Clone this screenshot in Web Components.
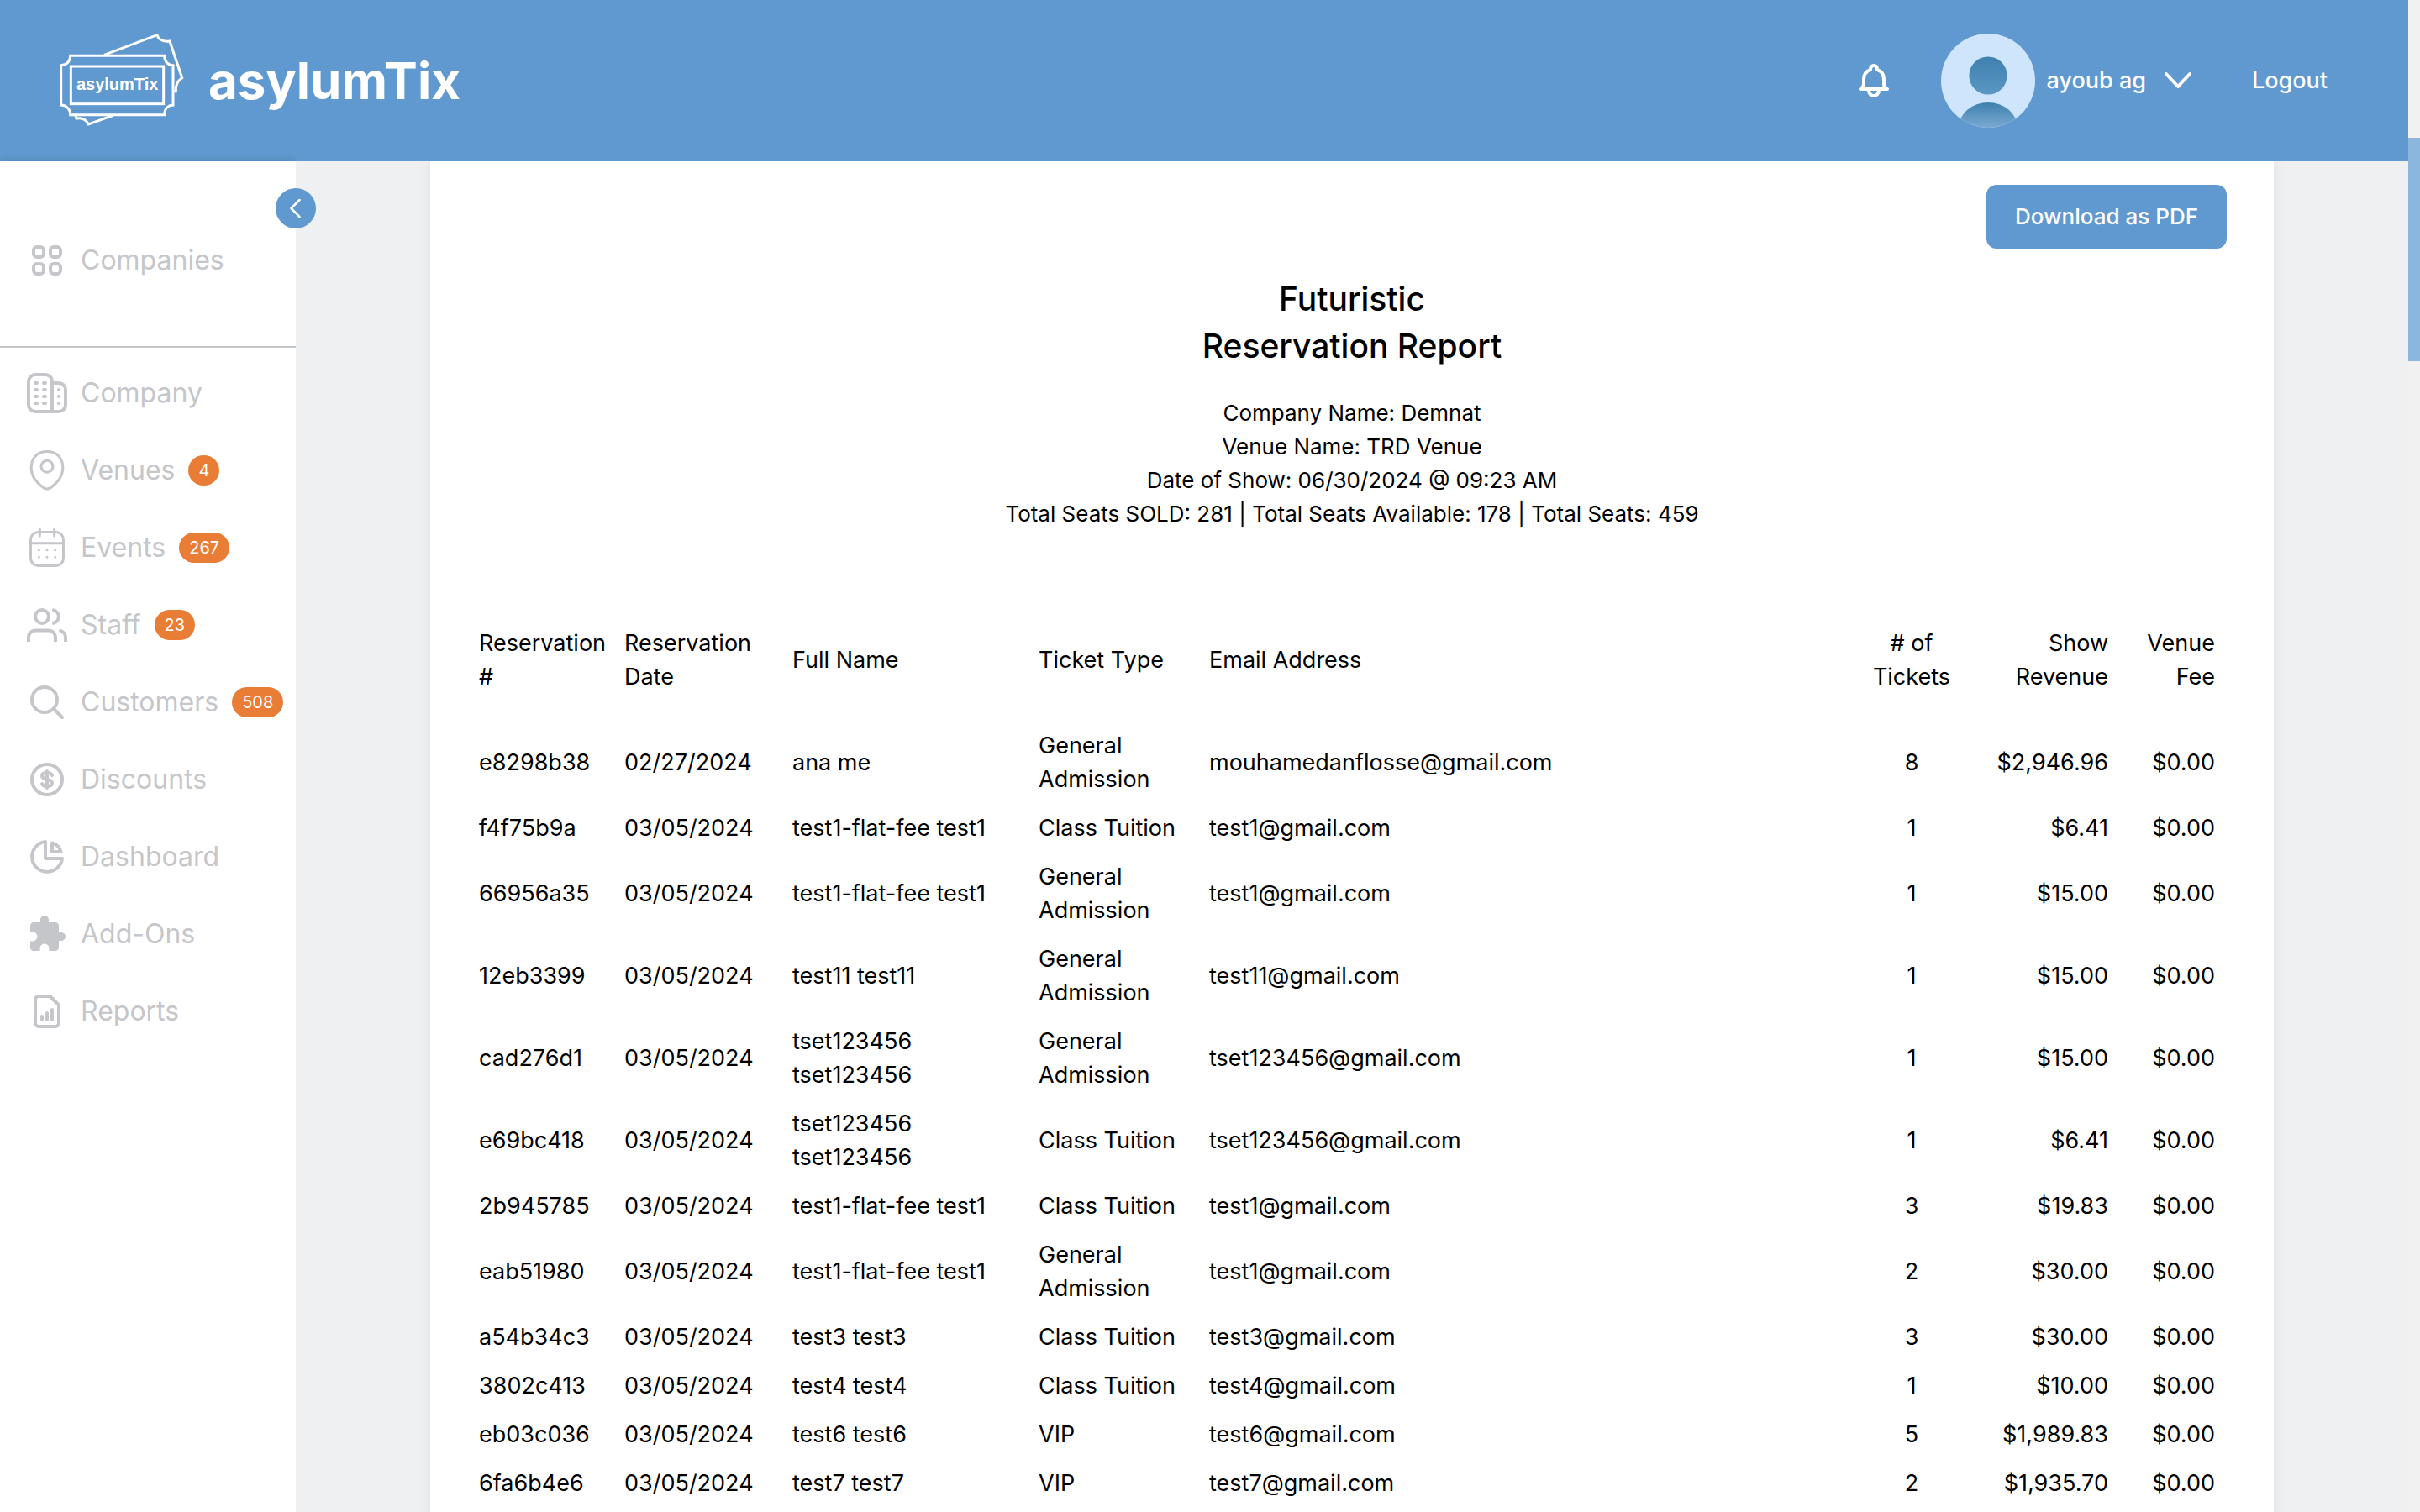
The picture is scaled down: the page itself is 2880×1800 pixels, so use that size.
<!DOCTYPE html>
<html lang="en">
<head>
<meta charset="utf-8">
<meta name="viewport" content="width=device-width, initial-scale=1">
<title>asylumTix – Reservation Report</title>
<style>
  html, body { margin: 0; height: 100%; }
  body {
    --blue: #6099cf;
    --orange: #e97d36;
    --muted: #c5c6ca;
    --canvas: #eff0f2;
    font-family: Inter, "DM Sans", "Liberation Sans", sans-serif;
    color: #000;
    overflow: hidden;
  }
</style>
</head>
<body>
<app-shell>
  <app-header slot="header" user="ayoub ag"></app-header>
  <side-nav slot="nav">
    <nav-item slot="top" icon="grid">Companies</nav-item>
    <nav-item icon="building">Company</nav-item>
    <nav-item icon="pin" count="4">Venues</nav-item>
    <nav-item icon="calendar" count="267">Events</nav-item>
    <nav-item icon="people" count="23">Staff</nav-item>
    <nav-item icon="search" count="508">Customers</nav-item>
    <nav-item icon="dollar">Discounts</nav-item>
    <nav-item icon="pie">Dashboard</nav-item>
    <nav-item icon="puzzle">Add-Ons</nav-item>
    <nav-item icon="report">Reports</nav-item>
  </side-nav>
  <report-card>
    <span slot="title">Futuristic</span>
    <span slot="title">Reservation Report</span>
    <span slot="info">Company Name: Demnat</span>
    <span slot="info">Venue Name: TRD Venue</span>
    <span slot="info">Date of Show: 06/30/2024 @ 09:23 AM</span>
    <span slot="info">Total Seats SOLD: 281 | Total Seats Available: 178 | Total Seats: 459</span>
    <reservation-table></reservation-table>
  </report-card>
</app-shell>

<script>
const define = (name, html, setup) => customElements.define(name, class extends HTMLElement {
  connectedCallback() {
    if (this.shadowRoot) return;
    const root = this.attachShadow({ mode: 'open' });
    const template = document.createElement('template');
    template.innerHTML = html;
    root.append(template.content.cloneNode(true));
    if (setup) setup(this, root);
  }
});

/* Icons share a 48-unit grid; stroke colour follows the text colour. */
const ICONS = {
  grid: '<g stroke-width="4"><rect x="8" y="8" width="12" height="12" rx="4"/><rect x="28" y="8" width="12" height="12" rx="4"/><rect x="8" y="28" width="12" height="12" rx="4"/><rect x="28" y="28" width="12" height="12" rx="4"/></g>',
  building: '<path stroke-width="4" d="M30 46V10a8 8 0 0 0-8-8H10a8 8 0 0 0-8 8v28a8 8 0 0 0 8 8h28a8 8 0 0 0 8-8V20a8 8 0 0 0-8-8h-8"/><path stroke-width="4" stroke-linecap="round" d="M10 12h2M20 12h2M10 20h2M20 20h2M10 28h2M20 28h2M10 36h2M20 36h2M38 20h.01M38 28h.01M38 36h.01"/>',
  pin: '<g stroke-width="3"><path d="M24 1.5C12 1.5 5.2 9.5 5.2 21c0 10 7.6 18.500 14 23.200 3 2.300 6.600 2.300 9.600 0C35.200 39.500 42.800 31 42.800 21 42.800 9.500 36 1.500 24 1.500z"/><circle cx="24" cy="19.300" r="7"/></g>',
  calendar: '<g stroke-width="3" stroke-linecap="round"><rect x="4.500" y="5.500" width="39" height="40" rx="9"/><path d="M5 18.700h38M15.300 2v8M32.700 2v8M14.300 26.700h.01M24 26.700h.01M33.700 26.700h.01M14.300 35.300h.01M24 35.300h.01M33.700 35.300h.01"/></g>',
  people: '<g stroke-width="4"><circle cx="18" cy="14" r="8"/><path d="M2 44v-5.500a8 8 0 0 1 8-8h16a8 8 0 0 1 8 8V44"/><path stroke-linecap="round" d="M32 6.300a8 8 0 0 1 0 15.400M40 31a8 8 0 0 1 6 7.500"/><path d="M46 38v6"/></g>',
  search: '<g stroke-width="4" stroke-linecap="round"><circle cx="21" cy="21" r="15"/><path d="M32 32l10 10"/></g>',
  dollar: '<g stroke-width="4" stroke-linecap="round"><circle cx="24" cy="24" r="18"/><path d="M24 14v20M30 19c-.8-2-2.800-3-6-3-3.600 0-6 1.200-6 3.800s2.400 3.400 6 4.100 6 1.600 6 4.100-2.400 4-6 4-5.200-1-6-3"/></g>',
  pie: '<g stroke-width="4" stroke-linejoin="round"><path d="M22 6v20h20A18 18 0 1 1 22 6z"/><path d="M30 7.500V18h10.500A15 15 0 0 0 30 7.500z"/></g>',
  puzzle: '<path fill="currentColor" stroke="none" transform="scale(2)" d="M20.500 11H19V7c0-1.100-.9-2-2-2h-4V3.500C13 2.120 11.880 1 10.500 1S8 2.120 8 3.500V5H4c-1.100 0-1.990.9-1.990 2v3.800H3.500c1.490 0 2.700 1.210 2.700 2.700s-1.210 2.700-2.700 2.700H2V20c0 1.100.9 2 2 2h3.800v-1.500c0-1.490 1.210-2.700 2.700-2.700 1.490 0 2.700 1.210 2.700 2.700V22H17c1.100 0 2-.9 2-2v-4h1.500c1.380 0 2.500-1.120 2.500-2.500S21.880 11 20.500 11z"/>',
  report: '<g stroke-width="4" stroke-linecap="round"><path stroke-linejoin="round" d="M27.500 6H14a4 4 0 0 0-4 4v28a4 4 0 0 0 4 4h20a4 4 0 0 0 4-4V16.500z"/><path d="M18 30v4M24 26v8M30 22v12"/></g>',
  bell: '<g stroke-width="4" stroke-linejoin="round"><path d="M8 34c3-1.500 4-3 4-6v-5c0-6 3-10.500 8-12 0-3.500 1.500-5 4-5s4 1.500 4 5c5 1.500 8 6 8 12v5c0 3 1 4.500 4 6z"/><path d="M18 35.500a6 6.500 0 0 0 12 0"/></g>',
  down: '<path stroke-width="4" stroke-linecap="round" stroke-linejoin="round" d="M10 16l14 15 14-15"/>',
  left: '<path stroke-width="5" stroke-linecap="round" stroke-linejoin="round" d="M33 4L13 24l20 20"/>'
};

define('app-icon', `
  <style>
    :host { display: block; flex: none; width: 48px; height: 48px; }
    svg { display: block; width: 100%; height: 100%; fill: none; stroke: currentColor; }
  </style>
  <svg viewBox="0 0 48 48" aria-hidden="true"></svg>`,
  (el, root) => { root.querySelector('svg').innerHTML = ICONS[el.getAttribute('name')] || ''; });

define('ticket-logo', `
  <style>
    :host { display: block; flex: none; width: 170px; height: 130px; }
    svg { display: block; width: 100%; height: 100%; }
    text { font: bold 60px "Liberation Sans", sans-serif; fill: #fff; }
  </style>
  <svg viewBox="0 3 510 390" fill="none" stroke="#fff" stroke-width="9" aria-hidden="true">
    <path d="M192 106L381 35C386 52 400 60 426 57L470 188C452 200 446 214 448 236H440M90 322L93 333C114 329 128 338 136 354L224 322"/>
    <path d="M71 109H407C407 130 420 143 438 143V285C420 286 407 298 407 320H71C71 300 58 286 38 285V143C58 142 71 130 71 109Z"/>
    <rect x="73" y="147" width="331" height="134"/>
    <text x="239" y="230" text-anchor="middle" stroke="none">asylumTix</text>
  </svg>`);

define('user-avatar', `
  <style>
    :host { display: block; flex: none; width: 112px; height: 112px; }
    svg { display: block; width: 100%; height: 100%; border-radius: 50%; }
  </style>
  <svg viewBox="0 0 112 112" aria-hidden="true">
    <defs>
      <linearGradient id="head" x1="0" y1="0" x2="0" y2="1"><stop stop-color="#3e80ae"/><stop offset="1" stop-color="#5b97c4"/></linearGradient>
      <linearGradient id="body" gradientUnits="userSpaceOnUse" x1="0" y1="82" x2="0" y2="112"><stop stop-color="#3e80ae"/><stop offset="1" stop-color="#7aaad2"/></linearGradient>
    </defs>
    <rect width="112" height="112" fill="#cfe5fc"/>
    <circle cx="56" cy="50" r="22.600" fill="url(#head)"/>
    <ellipse cx="56" cy="112" rx="35" ry="30" fill="url(#body)"/>
  </svg>`);

define('app-header', `
  <style>
    :host { display: flex; align-items: center; box-sizing: border-box; height: 192px; padding: 0 96px 0 60px; background: var(--blue); color: #fff; }
    .brand { display: flex; align-items: center; gap: 18px; margin-right: auto; color: inherit; text-decoration: none; font-size: 60px; font-weight: 700; line-height: 72px; }
    button, .logout { font: 500 27px/40px Inter, "Liberation Sans", sans-serif; color: inherit; background: none; border: 0; padding: 0; text-decoration: none; }
    .bell { margin-right: 56px; }
    .user { display: flex; align-items: center; gap: 14px; margin-right: 64px; }
  </style>
  <a class="brand" href="#home"><ticket-logo></ticket-logo><span>asylumTix</span></a>
  <button class="bell" aria-label="Notifications"><app-icon name="bell"></app-icon></button>
  <button class="user"><user-avatar></user-avatar><span class="name"></span><app-icon name="down"></app-icon></button>
  <a class="logout" href="#logout">Logout</a>`,
  (el, root) => { root.querySelector('.name').textContent = el.getAttribute('user'); });

define('count-badge', `
  <style>
    :host { display: block; flex: none; box-sizing: border-box; padding: 0 12px; border-radius: 18px; background: var(--orange); color: #fff; font-size: 20px; line-height: 36px; }
  </style>
  <slot></slot>`);

define('nav-item', `
  <style>
    :host { display: block; }
    a { display: flex; align-items: center; gap: 16px; height: 92px; padding-left: 32px; color: var(--muted); text-decoration: none; font-size: 32px; line-height: 40px; }
  </style>
  <a href="#"><span><slot></slot></span></a>`,
  (el, root) => {
    const icon = document.createElement('app-icon');
    icon.setAttribute('name', el.getAttribute('icon'));
    const link = root.querySelector('a');
    link.prepend(icon);
    if (el.hasAttribute('count')) {
      const badge = document.createElement('count-badge');
      badge.textContent = el.getAttribute('count');
      link.append(badge);
    }
  });

define('side-nav', `
  <style>
    :host { display: block; position: relative; z-index: 1; box-sizing: border-box; width: 352px; background: #fff; box-shadow: 0 0 10px rgba(0, 0, 0, .16); clip-path: inset(-12px 0 0 0); }
    .top { padding: 72px 0 56px; border-bottom: 2px solid var(--muted); }
    .list { padding-top: 8px; }
  </style>
  <nav>
    <div class="top"><slot name="top"></slot></div>
    <div class="list"><slot></slot></div>
  </nav>`);

define('report-card', `
  <style>
    :host { display: block; box-sizing: border-box; min-height: 100%; padding: 28px 56px; background: #fff; box-shadow: 0 0 16px rgba(0, 0, 0, .07); }
    .actions { display: flex; justify-content: flex-end; }
    button { height: 76px; padding: 0 34px; border: 0; border-radius: 12px; background: var(--blue); color: #fff; font: 500 26px/40px Inter, "Liberation Sans", sans-serif; }
    h1 { display: flex; flex-direction: column; align-items: center; margin: 32px 0; font-size: 39px; line-height: 56px; font-weight: 500; }
    .info { display: flex; flex-direction: column; align-items: center; margin-bottom: 81px; font-size: 26px; line-height: 40px; }
  </style>
  <div class="actions"><button>Download as PDF</button></div>
  <h1><slot name="title"></slot></h1>
  <div class="info"><slot name="info"></slot></div>
  <slot></slot>`);

const ROWS = [
  ['e8298b38', '02/27/2024', 'ana me', 'General Admission', 'mouhamedanflosse@gmail.com', '8', '$2,946.96', '$0.00'],
  ['f4f75b9a', '03/05/2024', 'test1-flat-fee test1', 'Class Tuition', 'test1@gmail.com', '1', '$6.41', '$0.00'],
  ['66956a35', '03/05/2024', 'test1-flat-fee test1', 'General Admission', 'test1@gmail.com', '1', '$15.00', '$0.00'],
  ['12eb3399', '03/05/2024', 'test11 test11', 'General Admission', 'test11@gmail.com', '1', '$15.00', '$0.00'],
  ['cad276d1', '03/05/2024', 'tset123456 tset123456', 'General Admission', 'tset123456@gmail.com', '1', '$15.00', '$0.00'],
  ['e69bc418', '03/05/2024', 'tset123456 tset123456', 'Class Tuition', 'tset123456@gmail.com', '1', '$6.41', '$0.00'],
  ['2b945785', '03/05/2024', 'test1-flat-fee test1', 'Class Tuition', 'test1@gmail.com', '3', '$19.83', '$0.00'],
  ['eab51980', '03/05/2024', 'test1-flat-fee test1', 'General Admission', 'test1@gmail.com', '2', '$30.00', '$0.00'],
  ['a54b34c3', '03/05/2024', 'test3 test3', 'Class Tuition', 'test3@gmail.com', '3', '$30.00', '$0.00'],
  ['3802c413', '03/05/2024', 'test4 test4', 'Class Tuition', 'test4@gmail.com', '1', '$10.00', '$0.00'],
  ['eb03c036', '03/05/2024', 'test6 test6', 'VIP', 'test6@gmail.com', '5', '$1,989.83', '$0.00'],
  ['6fa6b4e6', '03/05/2024', 'test7 test7', 'VIP', 'test7@gmail.com', '2', '$1,935.70', '$0.00']
];

define('reservation-table', `
  <style>
    :host { display: block; }
    table { width: 100%; table-layout: fixed; border-collapse: collapse; font-size: 27px; line-height: 40px; }
    th, td { padding: 9px 14px 9px 2px; text-align: left; vertical-align: middle; font-weight: 400; }
    th { padding-top: 33px; padding-bottom: 33px; }
    tr > :nth-child(6) { text-align: center; }
    tr > :nth-child(n + 7) { text-align: right; }
    col:nth-child(1) { width: 173px; }
    col:nth-child(2) { width: 200px; }
    col:nth-child(3) { width: 293px; }
    col:nth-child(4) { width: 203px; }
    col:nth-child(6) { width: 180px; }
    col:nth-child(7) { width: 152px; }
    col:nth-child(8) { width: 127px; }
    th:nth-child(6) { padding-left: 32px; padding-right: 44px; }
  </style>
  <table>
    <colgroup><col><col><col><col><col><col><col><col></colgroup>
    <thead><tr>
      <th>Reservation #</th><th>Reservation Date</th><th>Full Name</th><th>Ticket Type</th><th>Email Address</th><th># of Tickets</th><th>Show Revenue</th><th>Venue Fee</th>
    </tr></thead>
    <tbody></tbody>
  </table>`,
  (el, root) => {
    const body = root.querySelector('tbody');
    for (const row of ROWS) {
      const tr = body.insertRow();
      for (const value of row) tr.insertCell().textContent = value;
    }
  });

define('app-shell', `
  <style>
    :host { display: flex; height: 100vh; overflow: hidden; }
    .page { flex: 1; min-width: 0; display: flex; flex-direction: column; }
    .body { flex: 1; min-height: 0; display: flex; position: relative; }
    main { flex: 1; min-width: 0; padding: 0 160px; background: var(--canvas); overflow: hidden; }
    .toggle { position: absolute; z-index: 2; left: 328px; top: 32px; width: 48px; height: 48px; padding: 0; border: 0; border-radius: 50%; background: var(--blue); color: #fff; display: grid; place-items: center; }
    .toggle app-icon { width: 24px; height: 24px; }
    .scroll { flex: none; width: 14px; display: flex; flex-direction: column; background: #f1f1f1; }
    .scroll::before { content: ""; flex: 164; }
    .thumb { flex: 266; background: #8bb6dd; }
    .scroll::after { content: ""; flex: 1370; }
  </style>
  <div class="page">
    <slot name="header"></slot>
    <div class="body">
      <slot name="nav"></slot>
      <button class="toggle" aria-label="Collapse menu"><app-icon name="left"></app-icon></button>
      <main><slot></slot></main>
    </div>
  </div>
  <div class="scroll"><div class="thumb"></div></div>`);
</script>
</body>
</html>
